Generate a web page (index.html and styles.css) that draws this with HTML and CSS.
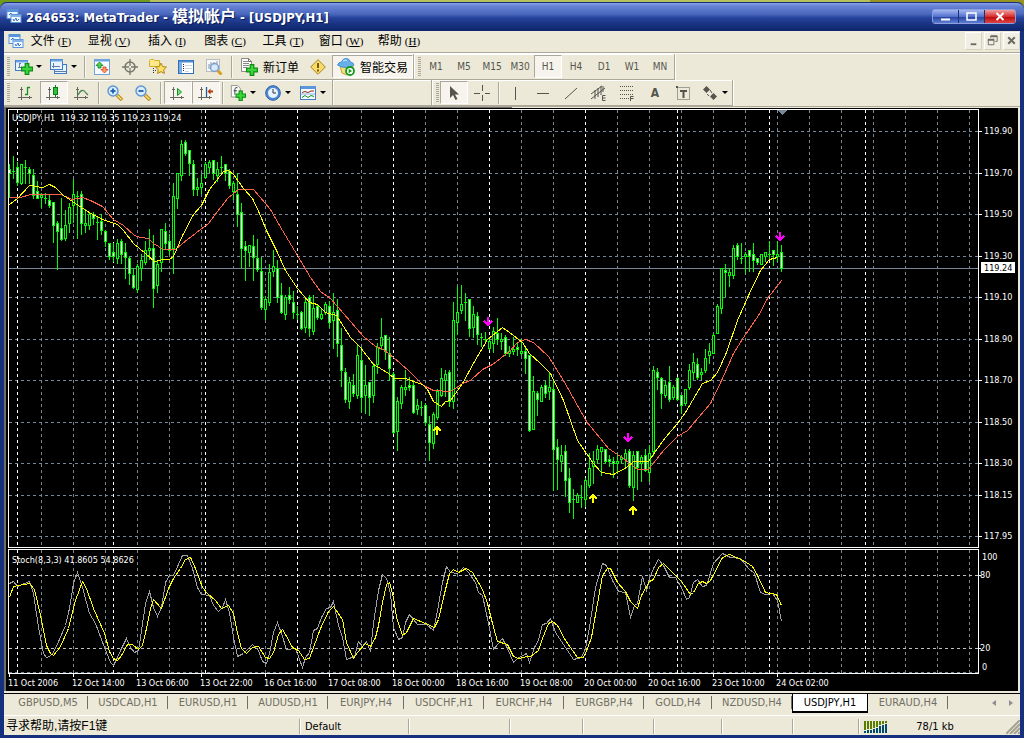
FILE: index.html
```
<!DOCTYPE html>
<html lang="zh-CN">
<head>
    <meta charset="UTF-8">
    <meta name="viewport" content="width=device-width, initial-scale=1.0">
    <title>264653: MetaTrader - 模拟帐户 - [USDJPY,H1]</title>
    <link rel="stylesheet" href="styles.css">
</head>
<body>
    <svg class="defs" width="0" height="0" aria-hidden="true">
        <symbol id="logo" viewBox="0 0 16 16">
            <rect x="1" y="1.500" width="11" height="9" fill="#eaf4ff" stroke="#5a94d8"/>
            <path d="M1 3h11" stroke="#5a94d8" stroke-width="2"/>
            <path d="M3 7l2-2 1 3 2-2" fill="none" stroke="#3b76c4"/>
            <rect x="5" y="6.500" width="10" height="8" fill="#f4faff" stroke="#5a94d8"/>
            <path d="M5 8h10" stroke="#7fb0e6" stroke-width="2"/>
            <path d="M7 11l1 2 2-3 1 3 2-2" fill="none" stroke="#3b76c4"/>
        </symbol>
        <symbol id="plus" viewBox="0 0 10 10">
            <path d="M3.500 .5h3v3h3v3h-3v3h-3v-3h-3v-3h3z" fill="#3bd63b" stroke="#0d8d12"/>
        </symbol>
        <symbol id="new-chart" viewBox="0 0 18 16">
            <rect x=".5" y="1.500" width="12" height="10" fill="#e8f3ff" stroke="#3f7cc4"/>
            <path d="M1 2.500h12" stroke="#6ba4e2" stroke-width="2"/>
            <path d="M4.500 4v5M3 8.500h8M4 5l1-1 1 1" fill="none" stroke="#5c7ea8"/>
            <use href="#plus" x="6" y="4" width="12" height="12"/>
        </symbol>
        <symbol id="profiles" viewBox="0 0 18 16">
            <rect x="4.500" y="5.500" width="12" height="9" fill="#e8f3ff" stroke="#3f7cc4"/>
            <path d="M5 12.500h11" stroke="#5c7ea8"/>
            <rect x=".5" y=".5" width="12" height="10" fill="#e8f3ff" stroke="#3f7cc4"/>
            <path d="M1 1.500h12" stroke="#6ba4e2" stroke-width="2"/>
            <path d="M3.500 4v5M2 7.500h8" stroke="#5c7ea8"/>
        </symbol>
        <symbol id="market" viewBox="0 0 16 16">
            <rect x=".5" y=".5" width="15" height="15" fill="#f6fbff" stroke="#6fa3da"/>
            <path d="M1 1.500h15" stroke="#6ba4e2" stroke-width="2"/>
            <path d="M5.500 3l3.500 3.500H7V9H4V6.500H2z" fill="#4fd04f" stroke="#0c7d1c" stroke-width=".8"/>
            <path d="M10.500 14L7 10.500h2V8h3v2.500h2z" fill="#ff9d6a" stroke="#d43c10" stroke-width=".8"/>
        </symbol>
        <symbol id="target" viewBox="0 0 16 16">
            <circle cx="8" cy="8" r="5" fill="none" stroke="#77776e" stroke-width="1.500"/>
            <path d="M8 0v7M8 9v7M0 8h7M9 8h7" stroke="#77776e" stroke-width="1.300"/>
        </symbol>
        <symbol id="navigator" viewBox="0 0 18 16">
            <path d="M.5 7.500v-6l1-1h3l1 1h5v6z" fill="#fbe98a" stroke="#d4b02a"/>
            <path d="M4.500 9v6M6 11.500h2" fill="none" stroke="#333" stroke-dasharray="1 1"/>
            <path d="M12 4l1.700 3.600 3.800.5-2.800 2.600.7 3.800-3.400-1.900-3.400 1.900.7-3.800-2.800-2.600 3.800-.5z" fill="#fbe06c" stroke="#b48410"/>
        </symbol>
        <symbol id="terminal" viewBox="0 0 16 16">
            <rect x=".5" y="1.500" width="15" height="13" fill="#fff" stroke="#2f6dbb"/>
            <path d="M1 2.500h14" stroke="#4d8ad2" stroke-width="2"/>
            <path d="M2.500 3v11" stroke="#7aaee6" stroke-width="3"/>
            <path d="M7 6.500h7M7 9.500h7M7 12.500h4" stroke="#c5d5ea"/>
            <path d="M5 5.500h1M5 7.500h1M5 9.500h1M5 11.500h1" stroke="#222"/>
        </symbol>
        <symbol id="tester" viewBox="0 0 18 16">
            <rect x="1.500" y=".5" width="13" height="12" fill="#f8f9fb" stroke="#b5bcc4"/>
            <path d="M4 10V5M6 9V3M9 7V3M12 6V2" stroke="#8494a8"/>
            <path d="M12.500 11.500l4 4" stroke="#d8a020" stroke-width="3"/>
            <circle cx="9.500" cy="8.500" r="4" fill="#cfe7ff" fill-opacity=".85" stroke="#7d9fc8" stroke-width="1.500"/>
        </symbol>
        <symbol id="order" viewBox="0 0 18 18">
            <path d="M1.500 .5h7l3 3v10h-10z" fill="#fff" stroke="#8d8d86"/>
            <path d="M3 3.500h5M3 5.500h6M3 7.500h6M3 9.500h4" stroke="#888"/>
            <path d="M8.500 .5v3h3" fill="none" stroke="#6d6d66"/>
            <use href="#plus" x="6" y="6" width="12" height="12"/>
        </symbol>
        <symbol id="warning" viewBox="0 0 16 16">
            <path d="M8 .7L15.300 8 8 15.300 .7 8z" fill="#f7dc6a" stroke="#a9831b"/>
            <path d="M8 4v5M8 10.500v2" stroke="#7b5a10" stroke-width="2"/>
        </symbol>
        <symbol id="expert" viewBox="0 0 18 18">
            <path d="M3 8l2 7 5 2 6-4V8z" fill="#f6df7b" stroke="#c9a137"/>
            <path d="M.5 7q1-3 4-3 1-3.500 4.500-3.500T13.500 4q3 .5 3.500 3-3 2.500-8 2.500T.5 7z" fill="#67b1e8" stroke="#4a8fce"/>
            <path d="M6 3q2-1.500 4-.5" fill="none" stroke="#d3ecff"/>
            <circle cx="13" cy="13" r="4" fill="#fff" stroke="#149b1f" stroke-width="1.800"/>
            <path d="M11.700 10.700v4.600l3.400-2.300z" fill="#149b1f"/>
        </symbol>
        <symbol id="axes" viewBox="0 0 16 16">
            <path d="M3.500 15V2M2 4.500h3M0 12.500h14M11.500 11v3" fill="none" stroke="#66665e"/>
        </symbol>
        <symbol id="bars" viewBox="0 0 16 16">
            <use href="#axes"/>
            <path d="M9.500 2v8M9.500 2.500H12M7 9.500h2.500" stroke="#169222" stroke-width="1.300"/>
        </symbol>
        <symbol id="candles" viewBox="0 0 16 16">
            <use href="#axes"/>
            <path d="M9.500 0v12" stroke="#0c7a18"/>
            <rect x="7.500" y="2.500" width="4" height="7" fill="#2bc437" stroke="#0c7a18"/>
        </symbol>
        <symbol id="line" viewBox="0 0 16 16">
            <use href="#axes"/>
            <path d="M4 10q4-8 8-2l2 2" fill="none" stroke="#4b8a52" stroke-width="1.300"/>
        </symbol>
        <symbol id="zoom" viewBox="0 0 16 16">
            <path d="M10 10l5 5" stroke="#b88412" stroke-width="3.500"/>
            <path d="M10.500 10.500l4 4" stroke="#fbe482" stroke-width="1.500"/>
            <circle cx="6" cy="6" r="5" fill="#d8ebff" stroke="#5b95da" stroke-width="1.400"/>
            <path d="M3.500 6h5" stroke="#1f5fae" stroke-width="1.800"/>
        </symbol>
        <symbol id="zoom-in" viewBox="0 0 16 16">
            <use href="#zoom"/>
            <path d="M6 3.500v5" stroke="#1f5fae" stroke-width="1.800"/>
        </symbol>
        <symbol id="autoscroll" viewBox="0 0 16 16">
            <use href="#axes"/>
            <path d="M7.500 3.500v7l4-3.500z" fill="#7fe07f" stroke="#169222"/>
        </symbol>
        <symbol id="shift" viewBox="0 0 16 16">
            <use href="#axes"/>
            <path d="M8.500 2v10" stroke="#1f5f9e" stroke-width="1.300"/>
            <path d="M9.500 6.500l3-3v2h2.500v2h-2.500v2z" fill="#b4380e"/>
        </symbol>
        <symbol id="indicators" viewBox="0 0 18 18">
            <path d="M1.500 .5h7l3 3v10h-10z" fill="#fff" stroke="#8d8d86"/>
            <path d="M8.500 3q-3-1-3 2v6M4 6.500h4" fill="none" stroke="#333"/>
            <use href="#plus" x="6" y="6" width="12" height="12"/>
        </symbol>
        <symbol id="clock" viewBox="0 0 16 16">
            <circle cx="8" cy="8" r="7.300" fill="#4d8ad6" stroke="#2d5fa4"/>
            <circle cx="8" cy="8" r="5" fill="#e8f3ff"/>
            <path d="M8 4v4h3" fill="none" stroke="#333"/>
        </symbol>
        <symbol id="template" viewBox="0 0 16 16">
            <rect x=".5" y="1.500" width="15" height="13" fill="#f7fbff" stroke="#3f7cc4"/>
            <path d="M1 2.500h15" stroke="#5b97da" stroke-width="3"/>
            <path d="M2 7.500l3-1 3 1 3-1.500h3" fill="none" stroke="#902a10"/>
            <path d="M2 12.500l3-2 3 2 3-2 3 1" fill="none" stroke="#169222"/>
            <path d="M1 9h14" stroke="#8bb4e0"/>
        </symbol>
        <symbol id="pointer" viewBox="0 0 16 16">
            <path d="M4 1v12l3-3 2.500 5 2-1L9 9.500h4z" fill="#55554e"/>
        </symbol>
        <symbol id="crosshair" viewBox="0 0 16 16">
            <path d="M8.500 0v6M8.500 10v6M0 8.500h6M11 8.500h5" stroke="#55554e"/>
        </symbol>
        <symbol id="vline" viewBox="0 0 16 16"><path d="M8.500 2v13" stroke="#55554e"/></symbol>
        <symbol id="hline" viewBox="0 0 16 16"><path d="M2 8.500h12" stroke="#55554e"/></symbol>
        <symbol id="trend" viewBox="0 0 16 16"><path d="M2 14L14 3" stroke="#55554e"/></symbol>
        <symbol id="channel" viewBox="0 0 16 16">
            <path d="M0 9l11-8M0 14L14 3M4 5v9M7 3v9M10 1v9M12 1v6" stroke="#55554e"/>
            <path d="M14.500 10.500h-3v5h3M11.500 13h3" fill="none" stroke="#55554e"/>
        </symbol>
        <symbol id="fibo" viewBox="0 0 16 16">
            <path d="M1 1.500h14M1 5.500h14M1 9.500h14M1 13.500h9" stroke="#55554e" stroke-dasharray="1 1"/>
            <path d="M14.500 11.500h-3v5M11.500 13.500h3" fill="none" stroke="#55554e"/>
        </symbol>
        <symbol id="label" viewBox="0 0 16 16">
            <rect x="2.500" y="2.500" width="12" height="12" fill="none" stroke="#55554e" stroke-dasharray="1 1"/>
            <path d="M1 1h2v2H1z" fill="#55554e"/>
            <path d="M5 6h7M8.500 6v7" stroke="#55554e" stroke-width="2"/>
        </symbol>
        <symbol id="arrows" viewBox="0 0 16 16">
            <path d="M4.500 1L8 4.500 4.500 8 1 4.500zM11.500 8l3.500 3.500-3.500 3.500L8 11.500z" fill="#55554e"/>
            <path d="M5 9l2 2M8 5l2 3" fill="none" stroke="#55554e"/>
        </symbol>
    </svg>

    <div class="window">
        <header class="titlebar">
            <svg class="icon"><use href="#logo"/></svg>
            <h1>264653: MetaTrader - <span class="account">模拟帐户</span> - [USDJPY,H1]</h1>
            <div class="window-buttons">
                <button type="button" aria-label="最小化"><svg viewBox="0 0 24 13"><path d="M8 9.500h9" stroke="#fff" stroke-width="2"/></svg></button>
                <button type="button" aria-label="最大化"><svg viewBox="0 0 24 13"><rect x="8" y="3" width="9" height="7" fill="none" stroke="#fff" stroke-width="1.500"/></svg></button>
                <button type="button" class="close" aria-label="关闭"><svg viewBox="0 0 24 13"><path d="M11.500 3l7 7M18.500 3l-7 7" stroke="#fff" stroke-width="2"/></svg></button>
            </div>
        </header>

        <nav class="menubar">
            <svg class="icon"><use href="#logo"/></svg>
            <button type="button">文件<span>(<u>F</u>)</span></button>
            <button type="button">显视<span>(<u>V</u>)</span></button>
            <button type="button">插入<span>(<u>I</u>)</span></button>
            <button type="button">图表<span>(<u>C</u>)</span></button>
            <button type="button">工具<span>(<u>T</u>)</span></button>
            <button type="button">窗口<span>(<u>W</u>)</span></button>
            <button type="button">帮助<span>(<u>H</u>)</span></button>
            <div class="child-buttons">
                <button type="button" aria-label="最小化图表"><svg viewBox="0 0 16 16"><path d="M5 12h6" stroke="#6b6b62" stroke-width="2"/></svg></button>
                <button type="button" aria-label="还原图表"><svg viewBox="0 0 16 16"><path d="M6 5V3.500h7V9h-2M3.500 7.500h6v5h-6z" fill="none" stroke="#6b6b62"/><path d="M3 7h7M6 3.500h7" stroke="#6b6b62" stroke-width="2"/></svg></button>
                <button type="button" aria-label="关闭图表"><svg viewBox="0 0 16 16"><path d="M4.500 4.500l7 7M11.500 4.500l-7 7" stroke="#6b6b62" stroke-width="2.200"/></svg></button>
            </div>
        </nav>

        <div class="toolbar-row">
            <div class="toolbar">
                <span class="grip"></span>
                <button type="button" class="drop" aria-label="新图表"><svg class="icon"><use href="#new-chart"/></svg></button>
                <button type="button" class="drop" aria-label="配置文件"><svg class="icon"><use href="#profiles"/></svg></button>
                <span class="sep"></span>
                <button type="button" aria-label="市场报价"><svg class="icon"><use href="#market"/></svg></button>
                <button type="button" aria-label="数据窗口"><svg class="icon"><use href="#target"/></svg></button>
                <button type="button" aria-label="导航器"><svg class="icon"><use href="#navigator"/></svg></button>
                <button type="button" aria-label="终端"><svg class="icon"><use href="#terminal"/></svg></button>
                <button type="button" aria-label="策略测试"><svg class="icon"><use href="#tester"/></svg></button>
                <span class="sep"></span>
                <button type="button" class="wide"><svg class="icon"><use href="#order"/></svg>新订单</button>
                <button type="button" aria-label="编辑器"><svg class="icon"><use href="#warning"/></svg></button>
                <button type="button" class="wide pressed"><svg class="icon"><use href="#expert"/></svg>智能交易</button>
            </div>
            <div class="toolbar periods">
                <span class="grip"></span>
                <button type="button">M1</button>
                <button type="button">M5</button>
                <button type="button">M15</button>
                <button type="button">M30</button>
                <button type="button" class="pressed">H1</button>
                <button type="button">H4</button>
                <button type="button">D1</button>
                <button type="button">W1</button>
                <button type="button">MN</button>
            </div>
        </div>

        <div class="toolbar-row">
            <div class="toolbar charts">
                <span class="grip"></span>
                <button type="button" aria-label="柱状图"><svg class="icon"><use href="#bars"/></svg></button>
                <button type="button" class="pressed" aria-label="蜡烛图"><svg class="icon"><use href="#candles"/></svg></button>
                <button type="button" aria-label="折线图"><svg class="icon"><use href="#line"/></svg></button>
                <span class="sep tight"></span>
                <button type="button" aria-label="放大"><svg class="icon"><use href="#zoom-in"/></svg></button>
                <button type="button" aria-label="缩小"><svg class="icon"><use href="#zoom"/></svg></button>
                <span class="sep"></span>
                <button type="button" class="pressed" aria-label="自动滚动"><svg class="icon"><use href="#autoscroll"/></svg></button>
                <button type="button" class="pressed" aria-label="图表平移"><svg class="icon"><use href="#shift"/></svg></button>
                <span class="sep tight"></span>
                <button type="button" class="drop" aria-label="指标"><svg class="icon"><use href="#indicators"/></svg></button>
                <button type="button" class="drop" aria-label="周期"><svg class="icon"><use href="#clock"/></svg></button>
                <button type="button" class="drop" aria-label="模板"><svg class="icon"><use href="#template"/></svg></button>
                <span class="sep tight end"></span>
            </div>
            <div class="toolbar drawing">
                <span class="grip"></span>
                <button type="button" class="pressed" aria-label="光标"><svg class="icon"><use href="#pointer"/></svg></button>
                <button type="button" aria-label="十字准线"><svg class="icon"><use href="#crosshair"/></svg></button>
                <span class="sep tight"></span>
                <button type="button" aria-label="垂直线"><svg class="icon"><use href="#vline"/></svg></button>
                <button type="button" aria-label="水平线"><svg class="icon"><use href="#hline"/></svg></button>
                <button type="button" aria-label="趋势线"><svg class="icon"><use href="#trend"/></svg></button>
                <button type="button" aria-label="等距通道"><svg class="icon"><use href="#channel"/></svg></button>
                <button type="button" aria-label="斐波那契回调"><svg class="icon"><use href="#fibo"/></svg></button>
                <button type="button" class="letter">A</button>
                <button type="button" aria-label="文字标签"><svg class="icon"><use href="#label"/></svg></button>
                <button type="button" class="drop" aria-label="箭头"><svg class="icon"><use href="#arrows"/></svg></button>
            </div>
        </div>

        <main class="chart-frame">
            <svg id="chart" viewBox="6 108 1012 583" role="img" aria-label="USDJPY,H1"></svg>
        </main>

        <nav class="tabs">
            <a href="#">GBPUSD,M5</a>
            <a href="#">USDCAD,H1</a>
            <a href="#">EURUSD,H1</a>
            <a href="#">AUDUSD,H1</a>
            <a href="#" class="narrow">EURJPY,H4</a>
            <a href="#">USDCHF,H1</a>
            <a href="#">EURCHF,H4</a>
            <a href="#">EURGBP,H4</a>
            <a href="#" class="short">GOLD,H4</a>
            <a href="#">NZDUSD,H4</a>
            <a href="#" class="narrow active">USDJPY,H1</a>
            <a href="#">EURAUD,H4</a>
            <div class="tab-scroll">
                <button type="button" aria-label="向左"><svg viewBox="0 0 4 6"><path d="M4 0v6L0 3z"/></svg></button>
                <button type="button" aria-label="向右"><svg viewBox="0 0 4 6"><path d="M0 0v6l4-3z"/></svg></button>
            </div>
        </nav>

        <footer class="statusbar">
            <div class="help">寻求帮助,请按F1键</div>
            <div>Default</div>
            <div></div>
            <div></div>
            <div></div>
            <div></div>
            <div></div>
            <div></div>
            <div class="traffic">
                <svg class="signal" viewBox="0 0 24 12">
                    <path d="M1 0v9M4 0v8M7 0v8M10 0v7M13 0v6M16 0v4M19 0v3M22 0v2" stroke="#5a7d00" stroke-width="2"/>
                    <path d="M1 10v2M4 9v3M7 9v3M10 8v4M13 7v5M16 5v7M19 4v8M22 3v9" stroke="#004a6e" stroke-width="2"/>
                </svg>
                <span>78/1 kb</span>
                <svg class="resize" viewBox="0 0 14 14"><path d="M0 14L14 0M4 14L14 4M8 14l6-6M12 14l2-2" stroke="#a5a294" stroke-width="2"/></svg>
            </div>
        </footer>
    </div>

    <script>
        const SVG_NS = 'http://www.w3.org/2000/svg';
        const chart = document.getElementById('chart');

        // high, body top, body bottom, low, 1 = closed lower
        const candles = [
            [164,169,173,197,1],[156,171,171,178,0],[162,167,182,185,1],[164,164,183,184,0],[160,167,167,183,0],
            [167,169,173,183,1],[169,175,195,198,1],[181,191,198,198,1],[193,195,197,207,0],[193,198,198,203,0],
            [195,200,205,207,1],[202,202,225,242,1],[221,223,231,269,1],[198,228,239,240,1],[210,225,238,240,0],
            [203,207,223,232,0],[179,194,205,222,0],[191,196,196,238,0],[191,194,223,234,1],[209,223,225,232,0],
            [212,214,225,229,0],[212,214,218,224,1],[216,222,222,239,0],[214,221,230,234,1],[230,231,241,246,1],
            [243,243,256,259,1],[243,252,256,261,1],[239,243,258,263,0],[239,241,254,263,1],[243,252,257,278,1],
            [256,258,273,284,1],[268,275,287,288,1],[264,266,289,292,0],[254,260,268,280,0],[241,250,262,264,0],
            [229,248,250,259,0],[235,248,288,307,1],[260,264,285,292,0],[229,229,262,271,0],[223,231,243,249,1],
            [234,241,250,254,1],[183,196,248,273,0],[173,173,198,208,0],[140,144,175,180,0],[140,142,153,155,1],
            [150,150,163,175,1],[160,164,189,195,1],[178,187,189,195,0],[174,183,187,193,0],[162,164,177,178,0],
            [160,162,167,172,0],[160,160,173,179,1],[162,169,175,181,0],[156,167,167,174,0],[164,164,173,180,1],
            [169,171,185,188,1],[181,183,191,199,0],[173,194,214,226,1],[203,212,248,267,1],[241,246,250,280,1],
            [245,245,252,266,0],[235,246,257,280,1],[239,258,269,271,1],[257,271,307,309,1],[296,299,309,319,0],
            [264,272,302,305,0],[250,266,271,276,0],[260,268,297,302,1],[283,295,312,313,1],[295,297,314,319,0],
            [287,295,299,303,1],[291,302,312,318,1],[306,314,314,319,0],[311,312,328,329,1],[297,302,327,332,0],
            [295,297,328,336,1],[295,308,331,334,0],[304,306,317,319,1],[309,314,318,319,0],[302,304,312,314,0],
            [301,306,322,327,1],[293,312,320,348,0],[299,310,343,356,1],[328,345,370,386,1],[368,372,399,402,1],
            [377,382,401,408,0],[374,385,393,396,1],[345,355,395,398,0],[347,360,397,411,1],[365,385,395,413,0],
            [382,382,397,415,1],[363,366,395,402,0],[343,347,364,373,0],[318,337,345,349,0],[335,335,351,359,1],
            [337,353,368,380,1],[372,374,432,433,1],[397,401,431,450,0],[385,387,403,408,0],[370,387,389,395,0],
            [377,385,387,390,1],[382,385,412,413,1],[399,405,409,414,0],[401,407,407,415,0],[403,405,422,425,1],
            [416,424,442,460,1],[412,414,443,448,0],[389,391,417,419,0],[368,378,395,396,0],[370,374,380,396,0],
            [370,372,401,406,1],[302,320,401,408,0],[287,312,322,334,0],[285,304,310,313,0],[293,302,302,320,0],
            [299,299,328,336,1],[306,314,327,337,0],[312,316,334,344,1],[333,337,337,346,0],[332,339,339,341,0],
            [339,341,348,349,0],[327,331,343,352,0],[318,333,339,344,1],[333,339,341,349,0],[335,337,353,355,1],
            [346,351,353,356,0],[337,349,351,354,0],[343,347,349,355,1],[339,351,353,355,0],[348,351,358,373,1],
            [355,355,430,431,1],[376,391,429,429,0],[391,393,399,415,1],[385,387,401,401,0],[381,385,393,397,1],
            [373,387,391,399,0],[381,389,449,490,1],[439,447,459,489,1],[445,455,461,471,0],[445,451,480,496,1],
            [468,478,502,512,1],[489,499,499,518,0],[493,495,502,502,0],[485,497,497,507,0],[478,480,499,506,0],
            [453,468,485,487,0],[451,461,466,483,0],[445,449,459,463,0],[447,447,451,475,0],[449,449,461,463,1],
            [455,459,461,466,1],[457,461,463,477,1],[453,461,463,473,0],[455,457,459,463,0],[449,453,459,468,0],
            [449,451,485,487,1],[451,455,487,500,0],[451,451,467,489,1],[455,457,463,481,0],[449,455,470,471,1],
            [445,453,472,481,0],[366,370,451,455,0],[368,372,377,389,1],[377,378,393,408,1],[381,385,395,397,0],
            [366,382,399,401,1],[385,387,397,399,0],[377,378,399,400,1],[395,395,405,413,1],[389,389,403,405,0],
            [364,370,387,389,0],[353,362,372,379,0],[358,364,377,379,1],[368,372,374,379,0],[349,358,370,372,0],
            [343,351,355,363,0],[333,335,353,353,0],[304,306,333,333,0],[268,268,308,313,0],[264,270,272,296,1],
            [268,272,275,286,0],[245,248,275,278,0],[243,245,256,259,1],[243,258,258,263,0],[252,254,256,273,0],
            [250,250,256,271,1],[243,254,260,271,1],[258,258,262,264,1],[254,254,264,264,0],[252,252,256,261,0],
            [241,254,254,258,0],[250,250,254,265,1],[241,254,256,261,0],[245,252,268,271,1]
        ];

        const fastMA = '9,204 17,198 29,185 42,187 49,184 55,187 63,195 75,203 87,211 102,219 117,224 123,230 133,243 145,253 154,261 163,259 169,259 173,256 182,235 193,214 201,205 209,189 223,171 228,170 233,174 243,188 252,198 259,213 266,230 277,252 285,270 297,288 309,302 317,304 325,312 336,315 350,337 360,347 373,364 380,368 388,373 394,378 405,378 422,384 427,389 433,401 441,406 445,401 450,400 462,383 474,361 487,339 502,327 509,332 522,342 529,353 540,363 550,373 563,400 577,440 586,453 593,463 601,472 613,474 626,467 633,461 648,461 657,448 665,437 677,423 685,412 702,383 710,380 717,372 726,352 737,320 748,295 760,270 769,259 777,257';
        const slowMA = '9,197 20,197 30,194 60,194 72,199 82,197 90,200 102,206 113,219 123,225 134,235 140,237 148,238 153,243 163,249 175,249 187,239 208,223 227,198 238,189 253,189 259,196 270,209 282,230 297,255 310,277 320,291 330,298 343,313 363,336 375,346 383,349 393,357 408,370 423,385 433,390 450,391 462,383 470,380 482,369 492,364 509,351 517,342 525,339 533,342 548,356 563,380 577,405 586,421 608,448 623,458 637,469 648,469 663,450 677,436 687,430 710,403 722,378 733,353 743,337 758,315 767,298 781,280';
        const stochMain = '9,583 13,581 17,586 29,581 33,593 38,627 43,653 46,657 51,655 55,648 65,625 69,608 73,583 77,572 82,587 89,613 95,623 104,647 110,662 113,665 117,657 121,648 126,638 130,647 134,652 138,650 140,637 145,603 149,591 153,607 157,616 161,607 165,582 169,575 173,575 182,555 187,555 192,568 197,587 201,594 209,595 213,605 218,611 222,607 225,599 229,612 233,637 237,656 243,653 252,644 258,650 262,661 266,663 269,653 273,632 277,622 281,633 286,649 295,648 302,667 305,657 309,652 313,630 317,628 321,617 326,608 330,607 333,601 338,625 342,637 346,659 354,656 358,641 362,646 366,641 370,651 373,623 378,590 382,574 386,578 390,593 393,627 398,639 402,637 405,622 409,614 417,624 426,624 433,630 437,610 442,582 446,566 450,572 457,573 463,567 468,572 475,582 478,592 482,595 488,623 493,649 502,638 507,648 513,662 517,658 526,653 529,662 534,647 538,640 542,624 546,623 550,618 555,632 573,659 581,657 585,648 589,627 595,587 602,563 606,565 612,580 618,591 625,592 630,617 634,605 637,603 642,576 646,590 649,578 653,568 658,559 663,565 669,577 675,577 681,587 686,599 689,597 693,582 697,579 702,586 706,585 713,563 722,553 730,557 740,558 748,568 754,573 760,592 765,594 772,593 777,600 781,621';
        const stochSignal = '9,597 13,586 29,583 34,589 40,615 46,645 50,653 53,655 60,646 68,628 75,600 82,581 86,588 93,608 104,633 109,651 113,658 117,660 121,655 127,644 132,644 138,649 142,645 146,628 150,608 153,599 161,608 168,588 173,578 180,568 185,559 190,557 195,568 202,587 207,593 215,600 221,608 228,605 233,613 237,633 241,648 246,653 252,647 258,646 265,657 269,658 273,652 278,634 282,629 285,634 292,647 298,650 304,659 309,658 313,647 320,628 328,611 333,606 342,619 346,642 353,658 357,652 365,643 370,646 375,637 378,625 382,602 386,584 389,582 393,597 396,617 402,635 406,632 413,618 425,623 434,627 438,619 443,597 449,573 453,569 458,572 466,568 472,572 482,589 487,603 492,623 497,641 507,644 513,656 518,658 527,656 530,656 538,650 542,638 548,623 552,621 557,625 565,640 577,657 583,657 587,648 591,637 597,603 602,575 607,568 610,568 617,582 625,591 630,601 637,608 641,595 649,581 653,579 658,567 663,563 669,569 675,575 681,581 690,594 693,592 698,583 702,581 706,583 710,580 722,557 729,554 743,560 752,566 757,575 765,592 776,594 781,605';

        const prices = [['119.90', 131], ['119.70', 173], ['119.50', 214], ['119.30', 256], ['119.10', 297], ['118.90', 339],
            ['118.70', 380], ['118.50', 422], ['118.30', 463], ['118.15', 495], ['117.95', 536]];
        const times = ['11 Oct 2006', '12 Oct 14:00', '13 Oct 06:00', '13 Oct 22:00', '16 Oct 16:00', '17 Oct 08:00', '18 Oct 00:00',
            '18 Oct 16:00', '19 Oct 08:00', '20 Oct 00:00', '20 Oct 16:00', '23 Oct 10:00', '24 Oct 02:00'];
        const days = [17, 113, 205, 297, 393, 489, 585, 677, 769, 865];

        function add(tag, attrs, text) {
            const el = document.createElementNS(SVG_NS, tag);
            for (const key in attrs) el.setAttribute(key, attrs[key]);
            if (text) el.textContent = text;
            chart.appendChild(el);
        }

        function path(cls, d) {
            add('path', { class: cls, d: d });
        }

        // move the points to pixel centres so that 1px strokes stay sharp
        function curve(cls, points) {
            add('polyline', { class: cls, points: points, transform: 'translate(.5 .5)' });
        }

        // grid
        for (let x = 41; x < 978; x += 32) {
            path('grid', `M${x}.5 110V547M${x}.5 550V673`);
        }
        prices.forEach(([label, y]) => path('grid', `M9 ${y}.5H978`));
        path('grid', 'M9 672.5H978');
        path('level', 'M9 575.5H978M9 648.5H978');
        days.forEach(x => path('day', `M${x}.5 110V547M${x}.5 550V673`));
        path('price-line', 'M9 268.5H978');

        // candles
        candles.forEach(([high, top, bottom, low, down], i) => {
            const x = 9 + i * 4;
            add('rect', { class: 'lime', x: x, y: high, width: 1, height: low - high + 1 });
            add('rect', { class: 'lime', x: x - 1, y: top, width: 3, height: bottom - top + 1 });
            if (bottom - top > 1) {
                add('rect', { class: down ? 'down' : 'up', x: x, y: top + 1, width: 1, height: bottom - top - 1 });
            }
        });

        curve('slow', slowMA);
        curve('fast', fastMA);
        curve('main', stochMain);
        curve('fast', stochSignal);

        // signals
        [[488, 317], [628, 433], [780, 232]].forEach(([x, y]) => path('sell', `M${x} ${y}v8M${x - 4} ${y + 4}l4 4l4 -4`));
        [[437, 435], [593, 503], [633, 515]].forEach(([x, y]) => path('buy', `M${x} ${y}v-8M${x - 4} ${y - 4}l4 -4l4 4`));
        path('marker', 'M778 110h9l-4.500 5z');

        // frames and axes
        path('frame', 'M8.500 109.500H978.500V547.500H8.500zM8.500 549.500H978.500V673.500H8.500z');
        prices.forEach(([label, y]) => {
            path('frame', `M979 ${y}.5h3`);
            add('text', { x: 984, y: y + 3 }, label);
        });
        path('frame', 'M979 575.5h2M979 648.5h2');
        add('rect', { class: 'tag', x: 981, y: 262, width: 34, height: 11 });
        add('text', { class: 'tag-text', x: 984, y: 271 }, '119.24');
        [['100', 982, 560], ['80', 980, 578], ['20', 980, 651], ['0', 982, 670]].forEach(([label, x, y]) => add('text', { x: x, y: y }, label));
        times.forEach((label, i) => {
            const x = 9 + i * 64;
            path('frame', `M${x}.5 674v3`);
            add('text', { x: x - 1, y: 686 }, label);
        });
        add('text', { x: 12, y: 121 }, 'USDJPY,H1\u00a0 119.32 119.35 119.23 119.24');
        add('text', { x: 12, y: 563 }, 'Stoch(8,3,3) 41.8605 54.8626');
    </script>
</body>
</html>
```
FILE: styles.css
```
* {
    box-sizing: border-box;
    margin: 0;
    padding: 0;
}

body {
    padding-top: 2px;
    background: linear-gradient(90deg, #6f9a1c 0, #6f9a1c 150px, #b6bf5a 150px, #b6bf5a 870px, #98931f 870px);
    font-family: 'DejaVu Sans Condensed', 'Noto Sans CJK SC', sans-serif;
    font-size: 11px;
    color: #000;
}

button {
    border: 0;
    background: none;
    font: inherit;
    color: inherit;
}

.defs {
    position: absolute;
}

.window {
    border: solid #15307c;
    border-width: 0 4px 4px;
    border-radius: 7px 7px 0 0;
    background: #ece9d8;
}

.icon {
    flex: none;
    width: 16px;
    height: 16px;
}

/* title bar */
.titlebar {
    display: flex;
    align-items: center;
    gap: 4px;
    height: 29px;
    margin: 0 -4px;
    padding: 0 8px 2px 6px;
    border-top: 1px solid #16307a;
    border-radius: 7px 7px 0 0;
    background: linear-gradient(#8ba2ea 0, #6883d6 3px, #4a68bd 11px, #26429a 15px, #17317e 22px, #0d256b);
    color: #fff;
}

.titlebar h1 {
    font-family: 'DejaVu Sans Condensed', sans-serif;
    font-size: 13px;
    line-height: 20px;
    text-shadow: 1px 1px #0b1b52;
    white-space: nowrap;
}

.account {
    font-family: 'Noto Sans CJK SC', sans-serif;
    font-size: 16px;
}

.window-buttons {
    display: flex;
    margin-left: auto;
    border: 1px solid #8ba0dc;
    border-radius: 3px;
}

.window-buttons button {
    width: 26px;
    height: 13px;
    border-right: 1px solid #1a3079;
    background: linear-gradient(#a3b6f2, #5472cc 50%, #24429c 51%, #5d7cd4);
}

.window-buttons button.close {
    width: 30px;
    border-right: 0;
    background: linear-gradient(#f0a0a0, #d83030 50%, #b80808 51%, #e04444);
}

.window-buttons svg {
    display: block;
    width: 24px;
    height: 13px;
}

/* menu */
.menubar {
    display: flex;
    align-items: center;
    height: 22px;
    padding: 0 0 2px 4px;
    border-bottom: 1px solid #aca899;
    box-shadow: 0 1px #fff;
    font-size: 12px;
}

.menubar > button {
    width: 58px;
    font-family: 'Noto Sans CJK SC', sans-serif;
    line-height: 18px;
    white-space: nowrap;
}

.menubar > .icon + button {
    margin-left: -2px;
}

.menubar span {
    margin-left: 3px;
    font-family: 'Liberation Serif', serif;
    font-size: 11px;
}

.child-buttons {
    display: flex;
    gap: 2px;
    margin-left: auto;
}

.child-buttons button {
    width: 17px;
    height: 18px;
    border: 1px solid #fff;
    border-color: #fff #d5d1bd #d5d1bd #fff;
    background: #f1efe3;
}

.child-buttons svg {
    display: block;
    width: 15px;
    height: 15px;
}

/* toolbars */
.toolbar-row {
    display: flex;
    height: 26px;
    margin-top: 1px;
}

.toolbar-row + .toolbar-row {
    margin-top: 0;
}

.toolbar {
    display: flex;
    align-items: center;
    padding-left: 3px;
    border-right: 1px solid #aca899;
    border-bottom: 1px solid #aca899;
    box-shadow: 1px 0 #fff, inset 0 1px #fff;
}

.toolbar.charts {
    width: 428px;
}

.toolbar .icon {
    width: 18px;
}

.grip {
    flex: none;
    width: 3px;
    height: 19px;
    margin-right: 1px;
    background: repeating-linear-gradient(#aca899 0, #aca899 1px, #ece9d8 1px, #ece9d8 2px);
}

.charts .grip {
    margin-right: 2px;
}

.toolbar button {
    display: flex;
    flex: none;
    align-items: center;
    justify-content: center;
    width: 28px;
    height: 23px;
    border: 1px solid transparent;
}

.toolbar .drop {
    width: 35px;
    gap: 3px;
}

.drop::after {
    content: '';
    border: 3px solid transparent;
    border-top-color: #000;
    border-bottom: 0;
}

.toolbar .wide {
    width: auto;
    gap: 5px;
    padding: 0 4px;
    font-size: 12px;
    white-space: nowrap;
}

.wide .icon {
    height: 18px;
}

.toolbar .pressed {
    border-color: #aca899 #fff #fff #aca899;
    background: #f6f4ec;
}

.sep {
    flex: none;
    width: 1px;
    height: 22px;
    margin: 0 3px;
    background: #aca899;
    box-shadow: 1px 0 #f8f7f0;
}

.tight {
    margin: 0 2px;
}

.end {
    height: 25px;
}

.periods,
.drawing {
    padding-left: 4px;
    color: #55554e;
}

.periods {
    font-size: 10px;
}

.letter {
    font-size: 12px;
    font-weight: bold;
}

/* chart */
.chart-frame {
    padding: 1px 2px 0;
    border-top: 1px solid #aca899;
    background: linear-gradient(90deg, #716f64, #716f64 50%, #ece9d8 50%);
}

#chart {
    display: block;
    width: 100%;
    height: auto;
    background: #000;
    shape-rendering: crispEdges;
    fill: none;
}

#chart text {
    font-family: 'DejaVu Sans Condensed', sans-serif;
    font-size: 9px;
    fill: #fff;
}

#chart .tag-text {
    fill: #000;
}

.grid {
    stroke: #778899;
    stroke-dasharray: 3 3;
}

.level {
    stroke: #c0c0c0;
    stroke-dasharray: 3 3;
}

.day {
    stroke: #fff;
    stroke-dasharray: 3 3;
}

.price-line {
    stroke: #778899;
}

.lime {
    fill: #00ff00;
}

.up {
    fill: #000;
}

.down,
.tag {
    fill: #fff;
}

.slow {
    stroke: #ff6347;
}

.fast {
    stroke: #ffff00;
}

.main {
    stroke: #a0a0a0;
}

.sell {
    stroke: #ff00ff;
    stroke-width: 2;
}

.buy {
    stroke: #ffff00;
    stroke-width: 2;
}

.marker {
    fill: #778899;
}

.frame {
    stroke: #fff;
}

/* chart tabs */
.tabs {
    display: flex;
    height: 22px;
    margin-top: 2px;
    padding-left: 4px;
    border-top: 1px solid #000;
}

.tabs a {
    position: relative;
    flex: 0 0 80px;
    height: 19px;
    line-height: 18px;
    text-align: center;
    text-decoration: none;
    color: #716f64;
}

.tabs a::after {
    content: '';
    position: absolute;
    top: 2px;
    right: 0;
    width: 1px;
    height: 13px;
    background: #716f64;
}

.tabs .narrow {
    flex-basis: 76px;
}

.tabs .short {
    flex-basis: 68px;
}

.tabs .active {
    border: 1px solid #000;
    border-top: 0;
    border-bottom-width: 2px;
    background: #fff;
    color: #000;
}

.tabs .active::after {
    display: none;
}

.tab-scroll {
    display: flex;
    align-items: center;
    gap: 13px;
    height: 18px;
    margin-left: auto;
    padding-right: 7px;
}

.tab-scroll svg {
    display: block;
    width: 4px;
    height: 6px;
    fill: #8e8c94;
}

/* status bar */
.statusbar {
    display: grid;
    grid-template-columns: 1fr 109px 101px 73px 71px 68px 71px 66px 162px;
    height: 20px;
    padding: 3px 0 1px;
    border-top: 1px solid #fff;
    line-height: 15px;
}

.statusbar div {
    padding-left: 5px;
    border-left: 1px solid #aca899;
    box-shadow: inset 1px 0 #fff;
}

.statusbar .help {
    padding-left: 2px;
    border: 0;
    box-shadow: none;
    font-family: 'Liberation Sans', 'Noto Sans CJK SC', sans-serif;
    font-size: 12px;
}

.statusbar .traffic {
    display: flex;
    align-items: center;
}

.traffic span {
    flex: 1;
    padding-right: 24px;
    text-align: center;
}

.signal {
    width: 24px;
    height: 12px;
}

.resize {
    align-self: flex-end;
    width: 14px;
    height: 14px;
}
```
